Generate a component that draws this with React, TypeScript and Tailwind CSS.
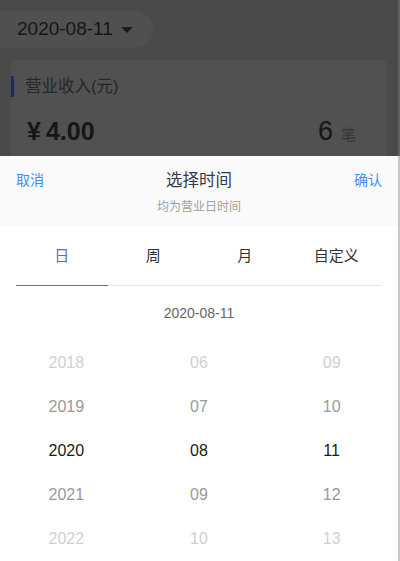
const tabs = ["日", "周", "月", "自定义"];

const columns = [
  ["2018", "2019", "2020", "2021", "2022"],
  ["06", "07", "08", "09", "10"],
  ["09", "10", "11", "12", "13"],
];

const rowColor = ["text-[#d0d0d0]", "text-[#999999]", "text-[#1a1a1a]", "text-[#999999]", "text-[#d0d0d0]"];

export default function App() {
  return (
    <div className="flex w-[400px] h-[561px] overflow-hidden bg-white font-['Liberation_Sans','Noto_Sans_CJK_SC',sans-serif]">
      <div className="flex flex-col w-[398px]">
        {/* Dimmed page behind the sheet */}
        <div className="h-[156px] overflow-hidden bg-[#4a4a4a]">
          <div className="mt-[11px] flex items-center w-[153px] h-[37px] rounded-r-full bg-[#505050] pl-[17px]">
            <span className="text-[19px] text-[#161616]">2020-08-11</span>
            <span className="ml-[8px] mt-[1px] w-0 h-0 border-x-[6px] border-x-transparent border-t-[6px] border-t-[#1c1c1c]" />
          </div>
          <div className="mt-[12px] mx-[11px] h-[120px] rounded-md bg-[#515151]">
            <div className="flex items-center pt-[14px]">
              <div className="w-[3px] h-[21px] bg-[#23266b]" />
              <span className="ml-[11px] text-[16.5px] text-[#262626]">营业收入(元)</span>
            </div>
            <div className="flex items-baseline mt-[12px] pl-[16px] pr-[31px]">
              <span className="mr-[5px] text-[25px] font-bold text-[#161616]">¥</span>
              <span className="text-[25px] font-bold text-[#161616]">4.00</span>
              <span className="ml-auto text-[27px] text-[#161616]">6</span>
              <span className="ml-[8px] text-[15px] text-[#363636]">笔</span>
            </div>
            <div className="mt-[7px] pl-[11px] text-[14px] text-[#2a2a2a]">本日结订单　¥1.10（6笔）</div>
          </div>
        </div>

        {/* Bottom sheet */}
        <div className="flex-1 bg-white">
          <div className="h-[70px] bg-[#fafafa]">
            <div className="flex items-center justify-between px-[16px] pt-[12px]">
              <span className="text-[14px] text-[#3a8ef6]">取消</span>
              <span className="text-[16.5px] text-[#333a48]">选择时间</span>
              <span className="text-[14px] text-[#3a8ef6]">确认</span>
            </div>
            <div className="mt-[5px] text-center text-[12px] text-[#a0a0a0]">均为营业日时间</div>
          </div>

          <div className="mx-[16px] grid grid-cols-4 h-[60px] border-b border-[#e6e6e6]">
            {tabs.map((t, i) => (
              <div
                key={t}
                className={`flex items-center justify-center pt-[1px] text-[15px] ${
                  i === 0 ? "text-[#5a6ae0] border-b border-[#5767e0] -mb-px" : "text-[#333333]"
                }`}
              >
                {t}
              </div>
            ))}
          </div>

          <div className="flex items-center justify-center h-[55px] pb-[1px] text-[14px] text-[#666666]">2020-08-11</div>

          <div className="grid grid-cols-3">
            {columns.map((col, c) => (
              <div key={c} className="flex flex-col">
                {col.map((v, r) => (
                  <div key={v} className={`flex items-center justify-center h-[44px] text-[16px] ${rowColor[r]}`}>
                    {v}
                  </div>
                ))}
              </div>
            ))}
          </div>
        </div>
      </div>

      {/* Scrollbar strip */}
      <div className="flex flex-col w-[2px]">
        <div className="h-[156px] bg-[#626262]" />
        <div className="flex-1 bg-[#c8c8c8]" />
      </div>
    </div>
  );
}
